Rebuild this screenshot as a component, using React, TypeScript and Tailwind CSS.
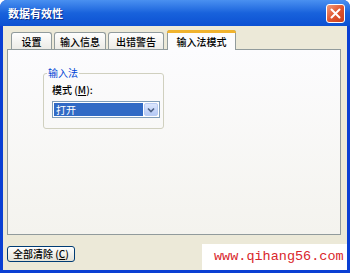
import { useState } from 'react';

const tabs = [
  { label: '设置', w: 'w-[41px]' },
  { label: '输入信息', w: 'w-[52px]' },
  { label: '出错警告', w: 'w-[56px]' },
  { label: '输入法模式', w: 'w-[69px]' },
];

const font = { fontFamily: '"Noto Sans CJK SC", "Noto Sans", sans-serif' };

const Tab = ({ label, w, active }: { label: string; w: string; active: boolean }) => {
  if (active) {
    return (
      <div
        className={`relative z-10 -mb-px ml-px flex h-[20px] ${w} items-center justify-center rounded-t-[3px] border border-b-0 border-[#919b9c] bg-[#fcfcfe] pt-[2px] text-[10px] font-medium text-black`}
      >
        <div className="absolute inset-x-[-1px] top-[-1px] h-[3px] rounded-t-[3px] bg-[#f0b32e]" />
        {label}
      </div>
    );
  }
  return (
    <div
      className={`mt-[2px] flex h-[17px] ${w} items-center justify-center rounded-t-[3px] border border-b-0 border-[#919b9c] bg-gradient-to-b from-[#fefefe] to-[#ecebe6] text-[10px] font-medium text-black`}
    >
      {label}
    </div>
  );
};

const App = () => {
  const [mode] = useState('打开');

  return (
    <div
      className="flex h-[273px] w-[350px] flex-col overflow-hidden rounded-t-[7px] bg-[#0a3fd3]"
      style={font}
    >
      {/* title bar */}
      <div className="flex h-[26px] shrink-0 items-center justify-between bg-gradient-to-b from-[#4a90f0] via-[#1862dc] to-[#0c50d2] pl-[8px] pr-[5px]">
        <span className="text-[11px] font-bold text-white [text-shadow:1px_1px_0_#0b2a8a]">数据有效性</span>
        <div className="flex h-[19px] w-[19px] items-center justify-center rounded-[3px] border border-white bg-gradient-to-br from-[#f09a7a] via-[#e0552f] to-[#c8401e]">
          <svg width="11" height="11" viewBox="0 0 11 11">
            <path d="M1.5 1.5 L9.5 9.5 M9.5 1.5 L1.5 9.5" stroke="white" strokeWidth="2" strokeLinecap="round" />
          </svg>
        </div>
      </div>

      {/* body */}
      <div className="mx-[3px] mb-[3px] flex flex-1 flex-col bg-[#ece9d8] pl-[4px] pr-[6px] pt-[4px]">
        <div className="flex items-end gap-[2px] pl-[4px]">
          {tabs.map((t) => (
            <Tab key={t.label} label={t.label} w={t.w} active={t.label === '输入法模式'} />
          ))}
        </div>
        <div className="h-[186px] border border-[#919b9c] bg-gradient-to-b from-[#fcfcfe] to-[#f4f3ee] pt-[23px] pl-[35px]">
          <div className="relative h-[56px] w-[121px] rounded-[3px] border border-[#d0d0bf] px-[8px] pt-[9px]">
            <span className="absolute left-[3px] top-[-8px] bg-[#fbfbfc] px-[1px] text-[10px] leading-[14px] text-[#0046d5]">
              输入法
            </span>
            <div className="text-[10px] font-medium leading-[14px] text-black">
              模式 (<span className="underline">M</span>):
            </div>
            <div className="mt-[4px] flex h-[17px] w-[108px] items-stretch border border-[#7f9db9] bg-white p-px">
              <div className="flex flex-1 items-center bg-[#316ac5] pl-[2px] text-[10px] leading-none text-white">
                {mode}
              </div>
              <div className="ml-px flex w-[14px] items-center justify-center rounded-[2px] border border-[#b8cbf3] bg-gradient-to-b from-[#dbe6fd] to-[#b5c9f5]">
                <svg width="8" height="6" viewBox="0 0 8 6">
                  <path d="M1 1.5 L4 4.5 L7 1.5" stroke="#4d6185" strokeWidth="1.6" fill="none" />
                </svg>
              </div>
            </div>
          </div>
        </div>

        <div className="flex flex-1 items-center justify-between">
          <button className="mt-[3px] flex h-[16px] items-center rounded-[3px] border border-[#003c74] bg-gradient-to-b from-white to-[#e3e1d7] px-[5px] text-[10px] font-medium leading-none text-black">
            全部清除 (<span className="underline">C</span>)
          </button>
          <div className="mr-[-6px] flex h-[26px] w-[145px] items-center self-end bg-white pl-[12px]">
            <span
              className="text-[13.5px] text-[#d9262b]"
              style={{ fontFamily: '"Liberation Mono", monospace' }}
            >
              www.qihang56.com
            </span>
          </div>
        </div>
      </div>
    </div>
  );
};

export default App;
